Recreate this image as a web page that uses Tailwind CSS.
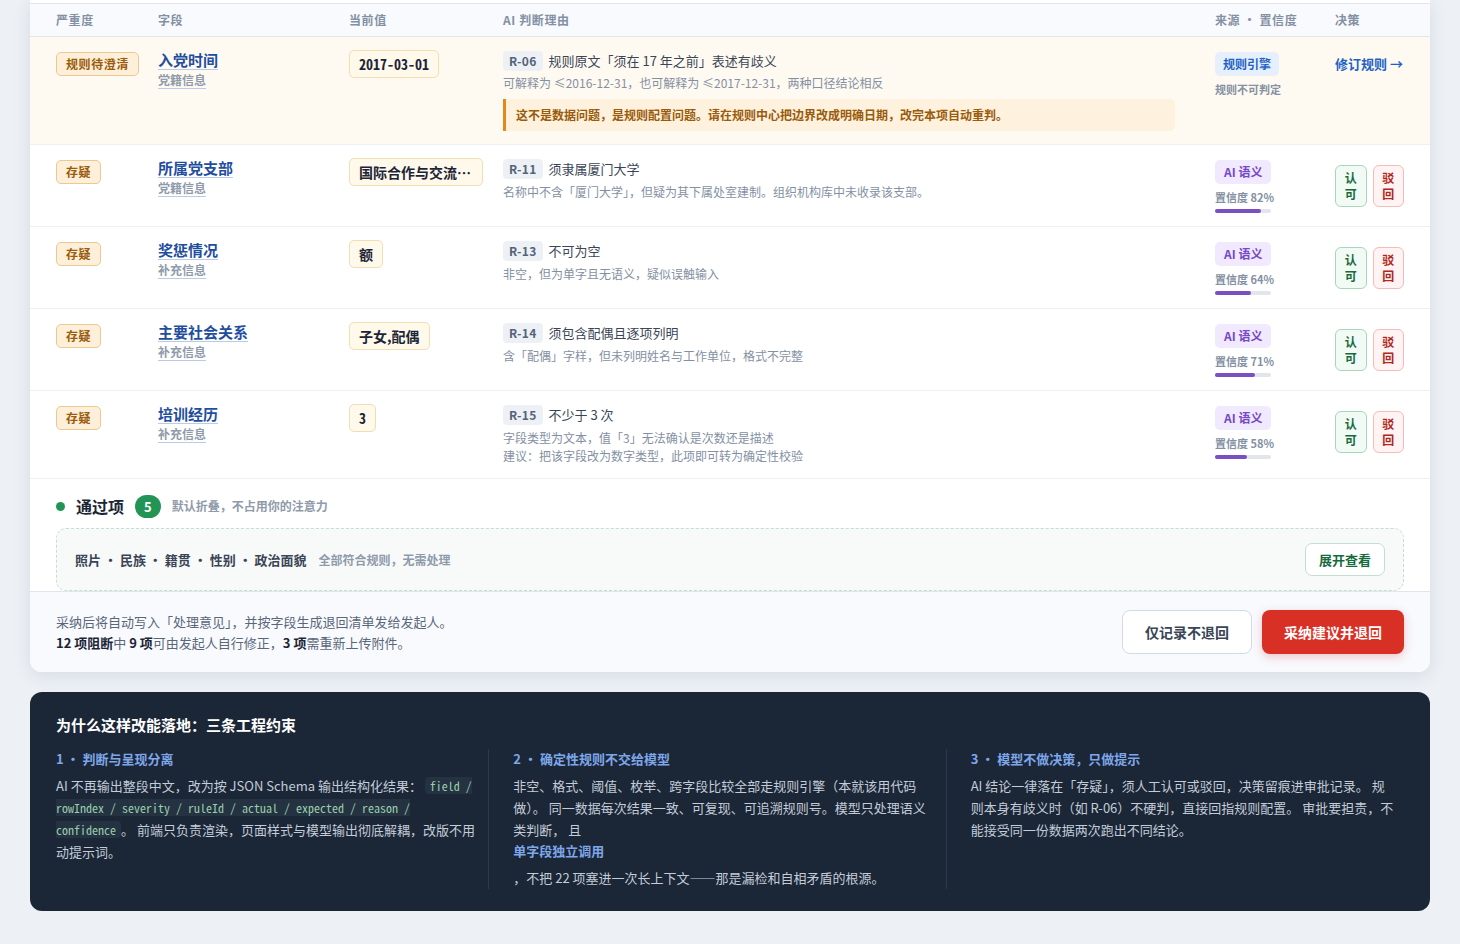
<!DOCTYPE html>
<html lang="zh-CN">
<head>
<meta charset="utf-8">
<meta name="viewport" content="width=device-width, initial-scale=1">
<title>审核结果</title>
<script src="https://cdn.jsdelivr.net/npm/@tailwindcss/browser@4"></script>
</head>
<body class="min-h-screen bg-[#edf1f6] px-[30px] pb-8 font-['Noto_Sans_CJK_SC',sans-serif] text-[13px] text-[#1c2536]">

<main class="rounded-b-xl bg-white pt-[3px] shadow-[0_4px_18px_rgba(30,45,75,0.11)]">
  <table class="w-full table-fixed border-collapse text-left">
    <colgroup>
      <col class="w-[128px]"><col class="w-[191px]"><col class="w-[154px]"><col><col class="w-[120px]"><col class="w-[95px]">
    </colgroup>
    <thead>
      <tr class="h-[33px] border-y border-[#e1e6ee] bg-[#f8fafe] text-xs leading-4 tracking-wider text-[#8490a3]">
        <th scope="col" class="pl-[26px] font-semibold">严重度</th>
        <th scope="col" class="font-semibold">字段</th>
        <th scope="col" class="font-semibold">当前值</th>
        <th scope="col" class="font-semibold">AI 判断理由</th>
        <th scope="col" class="font-semibold">来源 · 置信度</th>
        <th scope="col" class="font-semibold">决策</th>
      </tr>
    </thead>
    <tbody class="align-top">
      <tr class="border-b border-[#eceff3] bg-[#fffaf1]">
        <td class="py-[13px] pl-[26px]"><span class="mt-0.5 flex h-6 w-fit items-center rounded-[5px] border border-[#ecc98f] bg-[#fdefd9] px-[9px] text-xs font-bold tracking-wider text-[#9a5b0b]">规则待澄清</span></td>
        <td class="py-[13px]"><a href="#" class="flex flex-col items-start"><span class="border-b border-[#b9cbe6] text-[15px] leading-[19px] font-bold text-[#1f4e9f]">入党时间</span><span class="mt-px border-b border-[#b9cbe6] text-xs leading-[17px] font-semibold text-[#8f9aab]">党籍信息</span></a></td>
        <td class="py-[13px] pr-5"><span class="flex h-7 w-fit items-center rounded-[5px] border border-[#f3deb0] bg-[#fff9ec] px-[9px] font-['Noto_Sans_Mono_CJK_SC','Noto_Sans_CJK_SC',monospace] text-sm font-bold whitespace-nowrap">2017-03-01</span></td>
        <td class="py-[13px] pr-10">
          <p class="flex items-center gap-1.5 leading-[21px] text-[#3a4556]"><span class="rounded bg-[#edf1f6] px-1.5 text-xs leading-5 font-bold tracking-wide text-[#55627a]">R-06</span>规则原文「须在 17 年之前」表述有歧义</p>
          <p class="mt-[3px] text-xs leading-[18px] text-[#8490a3]">可解释为 ≤2016-12-31，也可解释为 ≤2017-12-31，两种口径结论相反</p>
          <p class="mt-[7px] rounded-r-[5px] border-l-3 border-[#e08a1b] bg-[#fef1de] px-[10px] py-[7px] text-xs leading-[18px] font-bold text-[#9a5b0b]">这不是数据问题，是规则配置问题。请在规则中心把边界改成明确日期，改完本项自动重判。</p>
        </td>
        <td class="py-[13px]"><span class="mt-0.5 flex h-6 w-fit items-center rounded-[5px] bg-[#e6effc] px-2 text-xs font-bold text-[#1e63c4]">规则引擎</span><p class="mt-[5px] text-[11px] leading-4 font-semibold text-[#8490a3]">规则不可判定</p></td>
        <td class="py-[13px]"><a href="#" class="mt-1 block text-[13px] leading-5 font-bold whitespace-nowrap text-[#1e63c4]">修订规则 →</a></td>
      </tr>
      <tr class="border-b border-[#eceff3]">
        <td class="py-[13px] pl-[26px]"><span class="mt-0.5 flex h-6 w-fit items-center rounded-[5px] border border-[#ecc98f] bg-[#fdefd9] px-[9px] text-xs font-bold tracking-wider text-[#9a5b0b]">存疑</span></td>
        <td class="py-[13px]"><a href="#" class="flex flex-col items-start"><span class="border-b border-[#b9cbe6] text-[15px] leading-[19px] font-bold text-[#1f4e9f]">所属党支部</span><span class="mt-px border-b border-[#b9cbe6] text-xs leading-[17px] font-semibold text-[#8f9aab]">党籍信息</span></a></td>
        <td class="py-[13px] pr-5"><span class="flex h-7 items-center rounded-[5px] border border-[#f3deb0] bg-[#fff9ec] px-[9px] text-sm font-bold whitespace-nowrap">国际合作与交流…</span></td>
        <td class="py-[13px] pr-10">
          <p class="flex items-center gap-1.5 leading-[21px] text-[#3a4556]"><span class="rounded bg-[#edf1f6] px-1.5 text-xs leading-5 font-bold tracking-wide text-[#55627a]">R-11</span>须隶属厦门大学</p>
          <p class="mt-1 text-xs leading-[18px] text-[#8490a3]">名称中不含「厦门大学」，但疑为其下属处室建制。组织机构库中未收录该支部。</p>
        </td>
        <td class="py-[13px]"><span class="mt-0.5 flex h-6 w-fit items-center rounded-[5px] bg-[#f1e9fd] px-[9px] text-xs font-bold text-[#7748c9]">AI 语义</span><p class="mt-[5px] text-[11px] leading-4 font-semibold text-[#8490a3]">置信度 82%</p><div class="mt-1 h-1 w-14 rounded-full bg-[#e2e6ec]"><div class="h-1 rounded-full bg-[#7a4fc4]" style="width:82%"></div></div></td>
        <td class="py-[13px] pr-[26px]"><div class="mt-[7px] flex gap-1.5"><button class="flex-1 rounded-md border border-[#a9d6bb] bg-[#f1faf4] px-2 py-1 text-xs leading-4 font-bold text-[#166b3c]">认可</button><button class="flex-1 rounded-md border border-[#f0bdb9] bg-[#fff4f3] px-2 py-1 text-xs leading-4 font-bold text-[#b02620]">驳回</button></div></td>
      </tr>
      <tr class="border-b border-[#eceff3]">
        <td class="py-[13px] pl-[26px]"><span class="mt-0.5 flex h-6 w-fit items-center rounded-[5px] border border-[#ecc98f] bg-[#fdefd9] px-[9px] text-xs font-bold tracking-wider text-[#9a5b0b]">存疑</span></td>
        <td class="py-[13px]"><a href="#" class="flex flex-col items-start"><span class="border-b border-[#b9cbe6] text-[15px] leading-[19px] font-bold text-[#1f4e9f]">奖惩情况</span><span class="mt-px border-b border-[#b9cbe6] text-xs leading-[17px] font-semibold text-[#8f9aab]">补充信息</span></a></td>
        <td class="py-[13px] pr-5"><span class="flex h-7 w-fit items-center rounded-[5px] border border-[#f3deb0] bg-[#fff9ec] px-[9px] text-sm font-bold whitespace-nowrap">额</span></td>
        <td class="py-[13px] pr-10">
          <p class="flex items-center gap-1.5 leading-[21px] text-[#3a4556]"><span class="rounded bg-[#edf1f6] px-1.5 text-xs leading-5 font-bold tracking-wide text-[#55627a]">R-13</span>不可为空</p>
          <p class="mt-1 text-xs leading-[18px] text-[#8490a3]">非空，但为单字且无语义，疑似误触输入</p>
        </td>
        <td class="py-[13px]"><span class="mt-0.5 flex h-6 w-fit items-center rounded-[5px] bg-[#f1e9fd] px-[9px] text-xs font-bold text-[#7748c9]">AI 语义</span><p class="mt-[5px] text-[11px] leading-4 font-semibold text-[#8490a3]">置信度 64%</p><div class="mt-1 h-1 w-14 rounded-full bg-[#e2e6ec]"><div class="h-1 rounded-full bg-[#7a4fc4]" style="width:64%"></div></div></td>
        <td class="py-[13px] pr-[26px]"><div class="mt-[7px] flex gap-1.5"><button class="flex-1 rounded-md border border-[#a9d6bb] bg-[#f1faf4] px-2 py-1 text-xs leading-4 font-bold text-[#166b3c]">认可</button><button class="flex-1 rounded-md border border-[#f0bdb9] bg-[#fff4f3] px-2 py-1 text-xs leading-4 font-bold text-[#b02620]">驳回</button></div></td>
      </tr>
      <tr class="border-b border-[#eceff3]">
        <td class="py-[13px] pl-[26px]"><span class="mt-0.5 flex h-6 w-fit items-center rounded-[5px] border border-[#ecc98f] bg-[#fdefd9] px-[9px] text-xs font-bold tracking-wider text-[#9a5b0b]">存疑</span></td>
        <td class="py-[13px]"><a href="#" class="flex flex-col items-start"><span class="border-b border-[#b9cbe6] text-[15px] leading-[19px] font-bold text-[#1f4e9f]">主要社会关系</span><span class="mt-px border-b border-[#b9cbe6] text-xs leading-[17px] font-semibold text-[#8f9aab]">补充信息</span></a></td>
        <td class="py-[13px] pr-5"><span class="flex h-7 w-fit items-center rounded-[5px] border border-[#f3deb0] bg-[#fff9ec] px-[9px] text-sm font-bold whitespace-nowrap">子女,配偶</span></td>
        <td class="py-[13px] pr-10">
          <p class="flex items-center gap-1.5 leading-[21px] text-[#3a4556]"><span class="rounded bg-[#edf1f6] px-1.5 text-xs leading-5 font-bold tracking-wide text-[#55627a]">R-14</span>须包含配偶且逐项列明</p>
          <p class="mt-1 text-xs leading-[18px] text-[#8490a3]">含「配偶」字样，但未列明姓名与工作单位，格式不完整</p>
        </td>
        <td class="py-[13px]"><span class="mt-0.5 flex h-6 w-fit items-center rounded-[5px] bg-[#f1e9fd] px-[9px] text-xs font-bold text-[#7748c9]">AI 语义</span><p class="mt-[5px] text-[11px] leading-4 font-semibold text-[#8490a3]">置信度 71%</p><div class="mt-1 h-1 w-14 rounded-full bg-[#e2e6ec]"><div class="h-1 rounded-full bg-[#7a4fc4]" style="width:71%"></div></div></td>
        <td class="py-[13px] pr-[26px]"><div class="mt-[7px] flex gap-1.5"><button class="flex-1 rounded-md border border-[#a9d6bb] bg-[#f1faf4] px-2 py-1 text-xs leading-4 font-bold text-[#166b3c]">认可</button><button class="flex-1 rounded-md border border-[#f0bdb9] bg-[#fff4f3] px-2 py-1 text-xs leading-4 font-bold text-[#b02620]">驳回</button></div></td>
      </tr>
      <tr class="border-b border-[#eceff3]">
        <td class="py-[13px] pl-[26px]"><span class="mt-0.5 flex h-6 w-fit items-center rounded-[5px] border border-[#ecc98f] bg-[#fdefd9] px-[9px] text-xs font-bold tracking-wider text-[#9a5b0b]">存疑</span></td>
        <td class="py-[13px]"><a href="#" class="flex flex-col items-start"><span class="border-b border-[#b9cbe6] text-[15px] leading-[19px] font-bold text-[#1f4e9f]">培训经历</span><span class="mt-px border-b border-[#b9cbe6] text-xs leading-[17px] font-semibold text-[#8f9aab]">补充信息</span></a></td>
        <td class="py-[13px] pr-5"><span class="flex h-7 w-fit items-center rounded-[5px] border border-[#f3deb0] bg-[#fff9ec] px-[9px] font-['Noto_Sans_Mono_CJK_SC','Noto_Sans_CJK_SC',monospace] text-sm font-bold whitespace-nowrap">3</span></td>
        <td class="py-[13px] pr-10">
          <p class="flex items-center gap-1.5 leading-[21px] text-[#3a4556]"><span class="rounded bg-[#edf1f6] px-1.5 text-xs leading-5 font-bold tracking-wide text-[#55627a]">R-15</span>不少于 3 次</p>
          <p class="mt-1 text-xs leading-[18px] text-[#8490a3]">字段类型为文本，值「3」无法确认是次数还是描述<br>建议：把该字段改为数字类型，此项即可转为确定性校验</p>
        </td>
        <td class="py-[13px]"><span class="mt-0.5 flex h-6 w-fit items-center rounded-[5px] bg-[#f1e9fd] px-[9px] text-xs font-bold text-[#7748c9]">AI 语义</span><p class="mt-[5px] text-[11px] leading-4 font-semibold text-[#8490a3]">置信度 58%</p><div class="mt-1 h-1 w-14 rounded-full bg-[#e2e6ec]"><div class="h-1 rounded-full bg-[#7a4fc4]" style="width:58%"></div></div></td>
        <td class="py-[13px] pr-[26px]"><div class="mt-[7px] flex gap-1.5"><button class="flex-1 rounded-md border border-[#a9d6bb] bg-[#f1faf4] px-2 py-1 text-xs leading-4 font-bold text-[#166b3c]">认可</button><button class="flex-1 rounded-md border border-[#f0bdb9] bg-[#fff4f3] px-2 py-1 text-xs leading-4 font-bold text-[#b02620]">驳回</button></div></td>
      </tr>
    </tbody>
  </table>

  <section class="px-[26px] pt-[15px]">
    <div class="flex items-center">
      <span class="size-[9px] rounded-full bg-[#229556]"></span>
      <h2 class="ml-[11px] text-base leading-6 font-bold">通过项</h2>
      <span class="ml-[11px] rounded-full bg-[#229556] px-[9px] text-[13px] leading-[23px] font-bold text-white">5</span>
      <span class="ml-[11px] text-xs font-semibold text-[#8f9aab]">默认折叠，不占用你的注意力</span>
    </div>
    <div class="mt-[10px] flex items-center rounded-[10px] border border-dashed border-[#c3dfd0] bg-[#f8faf9] px-[18px] py-[14px]">
      <strong class="text-[13px] font-bold text-[#3a4556]">照片 · 民族 · 籍贯 · 性别 · 政治面貌</strong>
      <span class="ml-3 text-xs font-semibold text-[#8f9aab]">全部符合规则，无需处理</span>
      <button class="ml-auto rounded-[7px] border border-[#c3dfd0] bg-white px-[13px] text-[13px] leading-[31px] font-bold text-[#166b3c]">展开查看</button>
    </div>
  </section>

  <footer class="flex items-center gap-[10px] rounded-b-xl border-t border-[#e1e6ee] bg-[#f8fafe] px-[26px] py-[18px]">
    <p class="mr-auto leading-[21px] text-[#5a6679]">采纳后将自动写入「处理意见」，并按字段生成退回清单发给发起人。<br><b class="font-bold text-[#1c2536]">12 项阻断</b>中 <b class="font-bold text-[#1c2536]">9 项</b>可由发起人自行修正，<b class="font-bold text-[#1c2536]">3 项</b>需重新上传附件。</p>
    <button class="h-11 rounded-lg border border-[#d3dae5] bg-white px-[22px] text-sm font-bold text-[#3a4556]">仅记录不退回</button>
    <button class="h-11 rounded-lg bg-[#d93026] px-[22px] text-sm font-bold text-white shadow-[0_3px_10px_rgba(217,48,38,0.25)]">采纳建议并退回</button>
  </footer>
</main>

<section class="mt-5 rounded-xl bg-[#1b2636] px-[26px] pt-[21px] pb-[22px] text-[#c3ccd9]">
  <h2 class="text-[15px] leading-[23px] font-bold text-white">为什么这样改能落地：三条工程约束</h2>
  <div class="mt-[13px] grid grid-cols-3 gap-6 leading-[22px]">
    <div class="border-r border-[#2d394a] pr-2">
      <h3 class="mb-1.5 leading-5 font-bold text-[#7ea6ea]">1 · 判断与呈现分离</h3>
      <p>AI 不再输出整段中文，改为按 JSON Schema 输出结构化结果： <code class="rounded bg-[#253242] px-[5px] font-['Noto_Sans_Mono_CJK_SC','Noto_Sans_CJK_SC',monospace] text-xs text-[#97cfaa]">field / rowIndex / severity / ruleId / actual / expected / reason / confidence</code>。 前端只负责渲染，页面样式与模型输出彻底解耦，改版不用动提示词。</p>
    </div>
    <div class="border-r border-[#2d394a] pr-2">
      <h3 class="mb-1.5 leading-5 font-bold text-[#7ea6ea]">2 · 确定性规则不交给模型</h3>
      <p>非空、格式、阈值、枚举、跨字段比较全部走规则引擎（本就该用代码做）。 同一数据每次结果一致、可复现、可追溯规则号。模型只处理语义类判断， 且 <strong class="mb-1.5 block leading-5 font-bold text-[#7ea6ea]">单字段独立调用</strong>，不把 22 项塞进一次长上下文——那是漏检和自相矛盾的根源。</p>
    </div>
    <div class="pr-2">
      <h3 class="mb-1.5 leading-5 font-bold text-[#7ea6ea]">3 · 模型不做决策，只做提示</h3>
      <p>AI 结论一律落在「存疑」，须人工认可或驳回，决策留痕进审批记录。 规则本身有歧义时（如 R-06）不硬判，直接回指规则配置。 审批要担责，不能接受同一份数据两次跑出不同结论。</p>
    </div>
  </div>
</section>

</body>
</html>
